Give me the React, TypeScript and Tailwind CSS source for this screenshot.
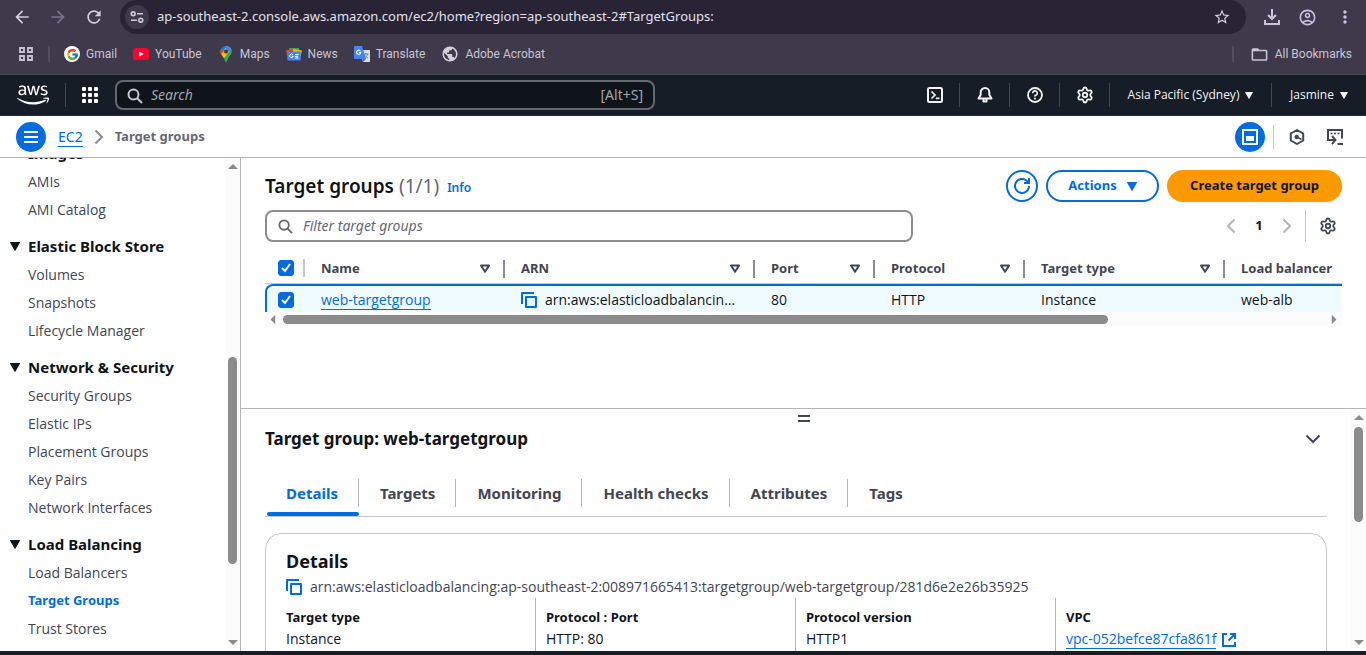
import React from "react";
import { Settings } from "lucide-react";
import { FaAws } from "react-icons/fa";
import { FcGoogle } from "react-icons/fc";
import {
  MdArrowBack,
  MdArrowForward,
  MdFolderOpen,
  MdMoreVert,
  MdOutlineAccountCircle,
  MdPublic,
  MdRefresh,
  MdStarBorder,
} from "react-icons/md";

type IconProps = { className?: string };

const SearchIcon = ({ className }: IconProps) => (
  <svg viewBox="0 0 16 16" className={className} fill="none" stroke="currentColor" strokeWidth="2">
    <circle cx="6.5" cy="6.5" r="5" />
    <path d="M10.2 10.2 15 15" />
  </svg>
);

const CaretDown = ({ className }: IconProps) => (
  <svg viewBox="0 0 10 9" className={className} fill="currentColor">
    <path d="M0.4 0h9.2c.4 0 .5.4.3.7L5.5 8.5c-.2.4-.8.4-1 0L.1.7C-.1.4 0 0 .4 0Z" />
  </svg>
);

const ScrollArrow = ({ className }: IconProps) => (
  <svg viewBox="0 0 10 5" className={className} fill="currentColor">
    <path d="M0 0h10L5 5Z" />
  </svg>
);

const SortIcon = ({ className }: IconProps) => (
  <svg viewBox="0 0 12 10" className={className} fill="none" stroke="currentColor" strokeWidth="2" strokeLinejoin="round">
    <path d="M2 1.5h8L6 7.8Z" />
  </svg>
);

const CopyIcon = ({ className }: IconProps) => (
  <svg viewBox="0 0 16 16" className={className} fill="none" stroke="currentColor" strokeWidth="2" strokeLinejoin="round">
    <path d="M1 12V1h12" />
    <path d="M5 5h10v10H5Z" />
  </svg>
);

const ExternalIcon = ({ className }: IconProps) => (
  <svg viewBox="0 0 14 14" className={className} fill="none" stroke="currentColor" strokeWidth="2">
    <path d="M5 1H1v12h12V9" />
    <path d="M8 1h5v5M13 1 6.5 7.5" />
  </svg>
);

const RefreshIcon = ({ className }: IconProps) => (
  <svg viewBox="0 0 16 16" className={className} fill="none" stroke="currentColor" strokeWidth="2">
    <path d="M15 8A7 7 0 1 1 12.6 2.7L14 4" />
    <path d="M15 0v5h-5" />
  </svg>
);

const Chevron = ({ className }: IconProps) => (
  <svg viewBox="0 0 10 16" className={className} fill="none" stroke="currentColor" strokeWidth="2">
    <path d="m1.5 1.5 6.5 6.5-6.5 6.5" />
  </svg>
);

const SiteInfoIcon = () => (
  <svg viewBox="0 0 14 12" className="h-3 w-[14px]" fill="none" stroke="#cfc9dc" strokeWidth="1.6">
    <circle cx="3.2" cy="2.8" r="1.9" />
    <path d="M7 2.8h6M1 9.2h6" />
    <circle cx="10.8" cy="9.2" r="1.9" />
  </svg>
);

const DownloadIcon = () => (
  <svg viewBox="0 0 16 16" className="size-4" fill="none" stroke="currentColor" strokeWidth="2">
    <path d="M8 0v9.500M4 6l4 4 4-4" />
    <path d="M1 11v4h14v-4" />
  </svg>
);

const AppsOutline = () => (
  <svg viewBox="0 0 14 14" className="size-[14px]" fill="none" stroke="#c9c4d4" strokeWidth="1.8">
    <path d="M1 1h4v4H1ZM9 1h4v4H9ZM1 9h4v4H1ZM9 9h4v4H9Z" />
  </svg>
);

const GridIcon = () => (
  <svg viewBox="0 0 16 16" className="size-4" fill="#ffffff">
    {[0, 6, 12].map((y) =>
      [0, 6, 12].map((x) => <rect key={`${x}-${y}`} x={x} y={y} width="4" height="4" rx="1" />),
    )}
  </svg>
);

const YouTubeMark = () => (
  <svg viewBox="0 0 16 12" className="h-3 w-4">
    <rect width="16" height="12" rx="2.6" fill="#ff0033" />
    <path d="M6 3.4v5.2L10.8 6Z" fill="#fff" />
  </svg>
);

const MapsMark = () => (
  <svg viewBox="-2 0 16 16" className="size-4">
    <defs>
      <clipPath id="pin">
        <path d="M6 0a5.600 5.600 0 0 1 5.600 5.600c0 3.600-3.600 4.800-4.600 9.200-.2 1.200-1.700 1.200-2 0C4 10.400.4 9.200.4 5.600A5.600 5.600 0 0 1 6 0Z" />
      </clipPath>
    </defs>
    <g clipPath="url(#pin)">
      <rect width="12" height="16" fill="#34a853" />
      <path d="M0 12V7l8-7h4v4L3 13Z" fill="#fbbc04" />
      <path d="M5 0h7v5L7 6Z" fill="#4285f4" />
      <path d="M0 0h5.500L4 5 1.500 3Z" fill="#1a73e8" />
      <path d="M0 2 4 5 0 9.500Z" fill="#ea4335" />
      <path d="m12 3-5 5-3 8h8Z" fill="#34a853" />
    </g>
    <circle cx="6" cy="5.500" r="2" fill="#3b3849" />
  </svg>
);

const NewsMark = () => (
  <svg viewBox="0 0 16 14" className="h-[14px] w-4">
    <path d="M3 1h10v6H3Z" fill="#34a853" />
    <path d="m0 3.500 8-2 1 6-8 1Z" fill="#ea4335" />
    <path d="m7 2 9 1.500-1.500 6H7Z" fill="#fbbc04" />
    <rect x="1.300" y="4.500" width="13.400" height="9" rx="1" fill="#4285f4" />
    <path d="M7 7.800a1.800 1.800 0 1 0 .3 1.500H5.600M9 7.500h3.600M9 9.300h3M9 11h3.600" fill="none" stroke="#fff" strokeWidth="1" />
  </svg>
);

const TranslateMark = () => (
  <svg viewBox="0 0 16 16" className="size-4">
    <path d="M6 4h9c.6 0 1 .4 1 1v10c0 .6-.4 1-1 1H9Z" fill="#dcdfe4" />
    <path d="M9.500 8h5M12 7v1M10.500 8c.4 2 2 3.500 3.500 4M13.600 8c-.5 2-1.800 3.500-3.400 4.300" fill="none" stroke="#6d7f8a" strokeWidth=".9" />
    <path d="M1 0h7l4 13H1c-.6 0-1-.4-1-1V1c0-.6.4-1 1-1Z" fill="#4285f4" />
    <path d="m9 13 3 0-3 3Z" fill="#3367d6" />
    <path d="M6.300 4.800A2.100 2.100 0 1 0 6.800 6.500H4.700" fill="none" stroke="#fff" strokeWidth="1.100" />
  </svg>
);

const TerminalIcon = () => (
  <svg viewBox="0 0 16 16" className="size-4" fill="none" stroke="#f2f3f5" strokeWidth="2">
    <rect x="1" y="1" width="14" height="14" rx="1.500" />
    <path d="m4.500 4.500 3.500 3.500-3.500 3.500" strokeWidth="1.700" />
    <path d="M8.800 11.300h3.700" strokeWidth="1.700" />
  </svg>
);

const BellIcon = () => (
  <svg viewBox="0 0 16 16" className="size-4" fill="none" stroke="#f2f3f5" strokeWidth="2" strokeLinejoin="round">
    <path d="M8 1a4.300 4.300 0 0 0-4.300 4.300v2.400L1.500 11.500h13l-2.200-3.800V5.300A4.300 4.300 0 0 0 8 1Z" />
    <path d="M6.500 12v2.500h3V12" />
  </svg>
);

const HelpIcon = () => (
  <svg viewBox="0 0 16 16" className="size-4" fill="none" stroke="#f2f3f5" strokeWidth="1.800">
    <circle cx="8" cy="8" r="7" />
    <path d="M5.700 6.300A2.300 2.300 0 1 1 8 8.500v1.200" strokeWidth="1.600" />
    <path d="M8 10.800v1.700" strokeWidth="1.800" />
  </svg>
);

const PanelIcon = () => (
  <svg viewBox="0 0 16 16" className="size-4" fill="none" stroke="#fff" strokeWidth="2">
    <path d="M1 1h14v14H1Z" />
    <path d="M5 8h6v3H5Z" fill="#fff" />
  </svg>
);

const HexIcon = () => (
  <svg viewBox="0 0 16 16" className="size-4" fill="none" stroke="#424650" strokeWidth="2" strokeLinejoin="round">
    <path d="M8 1 14.200 4.500v7L8 15l-6.200-3.500v-7Z" />
    <circle cx="7.700" cy="8" r="2.200" fill="#424650" stroke="none" />
    <path d="m8 8 4.500 2.500" strokeWidth="1.500" />
  </svg>
);

const ShellIcon = () => (
  <svg viewBox="0 0 16 16" className="size-4" fill="none" stroke="#424650" strokeWidth="2">
    <path d="M1 11V1h14v8.500" />
    <path d="M3.500 4.500h2M7 4.500h2M10.500 4.500h2" strokeWidth="1.500" />
    <path d="M0 11h8.500M5 7l3.500 4L5 15" strokeWidth="1.900" />
    <path d="M10.500 15H16" />
  </svg>
);

function CheckBox({ label }: { label: string }) {
  return (
    <label className="relative block size-4">
      <input
        type="checkbox"
        defaultChecked
        aria-label={label}
        className="peer block size-4 appearance-none rounded-[3px] border border-[#8c8c94] bg-white checked:border-[#006ce0] checked:bg-[#006ce0]"
      />
      <svg viewBox="0 0 16 16" className="pointer-events-none absolute inset-0 hidden size-4 peer-checked:block" fill="none" stroke="#fff" strokeWidth="2">
        <path d="m4 8 3 3 5-7" />
      </svg>
    </label>
  );
}

function VerticalScrollbar({ children }: { children: React.ReactNode }) {
  return (
    <div className="flex w-[15px] shrink-0 flex-col items-center bg-[#fcfcfc] py-1.5 text-[#8b8b8b]" aria-hidden="true">
      <ScrollArrow className="h-[5px] w-2.5 shrink-0 rotate-180" />
      <div className="flex w-full flex-1 flex-col items-center">{children}</div>
      <ScrollArrow className="h-[5px] w-2.5 shrink-0" />
    </div>
  );
}

const bookmarks = [
  { name: "Gmail", icon: <span className="grid size-4 place-items-center rounded-full bg-white"><FcGoogle className="size-[13px]" /></span> },
  { name: "YouTube", icon: <YouTubeMark /> },
  { name: "Maps", icon: <MapsMark /> },
  { name: "News", icon: <NewsMark /> },
  { name: "Translate", icon: <TranslateMark /> },
  { name: "Adobe Acrobat", icon: <MdPublic className="size-[18px] text-[#d3d0da]" /> },
];

function BrowserChrome() {
  return (
    <header className="shrink-0 border-b border-[#4a4850] bg-[#3e394b] text-[#c9c4d4]">
      <div className="flex h-[34px] items-center">
        <div className="flex w-[120px] items-center gap-4 pl-[12px]">
          <button aria-label="Back"><MdArrowBack className="size-5 text-[#d2cddc]" /></button>
          <button aria-label="Forward"><MdArrowForward className="size-5 text-[#79748a]" /></button>
          <button aria-label="Reload"><MdRefresh className="size-5 text-[#d2cddc]" /></button>
        </div>
        <div className="flex h-full flex-1 items-center rounded-full bg-[#282436] pr-[15px] pl-[5px]">
          <button aria-label="Site information" className="grid size-6 place-items-center rounded-full bg-[#3e394b]">
            <SiteInfoIcon />
          </button>
          <input
            aria-label="Address"
            defaultValue="ap-southeast-2.console.aws.amazon.com/ec2/home?region=ap-southeast-2#TargetGroups:"
            className="ml-2 flex-1 bg-transparent text-[13px] text-[#e3e0ea] outline-none"
          />
          <button aria-label="Bookmark"><MdStarBorder className="size-[18px] text-[#d2cddc]" /></button>
        </div>
        <div className="flex w-[120px] items-center gap-[18px] pl-[18px] text-[#c9c3dc]">
          <button aria-label="Downloads"><DownloadIcon /></button>
          <button aria-label="Profile"><MdOutlineAccountCircle className="size-[19px]" /></button>
          <button aria-label="Menu"><MdMoreVert className="size-5" /></button>
        </div>
      </div>
      <nav aria-label="Bookmarks" className="flex h-10 items-center pr-[14px] pl-[19px] font-[Roboto,'Noto_Sans',sans-serif] text-xs">
        <button aria-label="Apps"><AppsOutline /></button>
        <span className="mr-[14px] ml-[15px] h-4 w-0.5 bg-[#544f60]" />
        <div className="flex items-center gap-4">
          {bookmarks.map((b) => (
            <a key={b.name} href="#" className="flex items-center gap-1.5">
              {b.icon}
              {b.name}
            </a>
          ))}
        </div>
        <span className="mr-4 ml-auto h-4 w-0.5 bg-[#544f60]" />
        <a href="#" className="flex items-center gap-1.5">
          <MdFolderOpen className="size-[19px]" />
          All Bookmarks
        </a>
      </nav>
    </header>
  );
}

function Divider() {
  return <span className="h-6 w-px bg-[#424650]" />;
}

function AwsHeader() {
  return (
    <div className="flex h-[41px] shrink-0 items-center border-b border-[#232b37] bg-[#161d26] text-[#f2f3f5]">
      <a href="#" aria-label="AWS" className="pl-[17px]">
        <FaAws className="h-[26px] w-8 text-white" />
      </a>
      <span className="mr-4 ml-4 h-6 w-px bg-[#424650]" />
      <button aria-label="Services"><GridIcon /></button>
      <label className="ml-[17px] flex h-[30px] w-[540px] items-center rounded-lg border-2 border-[#656871] bg-[#0f141a] px-2.5">
        <SearchIcon className="mt-px size-4 text-[#c6c6cd]" />
        <input aria-label="Search" placeholder="Search" className="ml-2 flex-1 bg-transparent text-sm outline-none placeholder:text-[#a4a4ad] placeholder:italic" />
        <span className="text-sm text-[#a4a4ad]">[Alt+S]</span>
      </label>
      <div className="ml-auto flex items-center font-['Open_Sans','Noto_Sans',sans-serif]">
        {[
          { label: "CloudShell", icon: <TerminalIcon /> },
          { label: "Notifications", icon: <BellIcon /> },
          { label: "Help", icon: <HelpIcon /> },
          { label: "Settings", icon: <Settings className="size-[18px]" strokeWidth={2.4} /> },
        ].map((item) => (
          <React.Fragment key={item.label}>
            <button aria-label={item.label} className="grid w-[49px] place-items-center">{item.icon}</button>
            <Divider />
          </React.Fragment>
        ))}
        <button className="flex w-[161px] items-center justify-center gap-1.5 text-xs font-medium">
          Asia Pacific (Sydney)
          <CaretDown className="h-[7px] w-2" />
        </button>
        <Divider />
        <button className="flex w-[94px] items-center justify-center gap-1.5 text-xs font-medium">
          Jasmine
          <CaretDown className="h-[7px] w-2" />
        </button>
      </div>
    </div>
  );
}

function Breadcrumbs() {
  return (
    <div className="flex h-[42px] shrink-0 items-center border-b border-[#b4b4bb] bg-white px-4">
      <button aria-label="Open navigation" className="grid size-[30px] place-items-center rounded-full bg-[#006ce0]">
        <svg viewBox="0 0 14 12" className="h-3 w-[14px]" stroke="#fff" strokeWidth="2">
          <path d="M0 1h14M0 6h14M0 11h14" />
        </svg>
      </button>
      <nav aria-label="Breadcrumb" className="ml-3 flex items-center">
        <a href="#" className="border-b border-[#006ce0] pt-px text-sm leading-[18px] text-[#006ce0]">EC2</a>
        <Chevron className="mx-[11px] h-4 w-2.5 text-[#8c8c94]" />
        <span className="text-[13px] font-bold text-[#656871]">Target groups</span>
      </nav>
      <div className="ml-auto flex items-center">
        <button aria-label="Split panel" className="grid size-[30px] place-items-center rounded-full bg-[#006ce0]">
          <PanelIcon />
        </button>
        <span className="mr-[15px] ml-2 h-6 w-px bg-[#c6c6cd]" />
        <button aria-label="Amazon Q"><HexIcon /></button>
        <button aria-label="Console tools" className="mr-[7px] ml-[22px]"><ShellIcon /></button>
      </div>
    </div>
  );
}

const navigation = [
  { title: "Images", items: ["AMIs", "AMI Catalog"] },
  { title: "Elastic Block Store", items: ["Volumes", "Snapshots", "Lifecycle Manager"] },
  { title: "Network & Security", items: ["Security Groups", "Elastic IPs", "Placement Groups", "Key Pairs", "Network Interfaces"] },
  { title: "Load Balancing", items: ["Load Balancers", "Target Groups", "Trust Stores"] },
];

function Sidebar() {
  return (
    <aside className="flex w-[241px] shrink-0 border-r border-[#b4b4bb]">
      <nav aria-label="EC2" className="min-w-0 flex-1 overflow-hidden">
        <div className="-mt-[19px] flex flex-col gap-2">
          {navigation.map((group) => (
            <section key={group.title}>
              <button className="flex h-[29px] items-center gap-2 pl-2.5 text-[15px] font-bold text-[#0f141a]">
                <CaretDown className="h-[9px] w-2.5" />
                {group.title}
              </button>
              <ul>
                {group.items.map((item) => (
                  <li key={item} className="flex h-7 items-center pl-7">
                    <a
                      href="#"
                      className={
                        item === "Target Groups"
                          ? "text-[13px] font-bold text-[#006ce0]"
                          : "font-['Open_Sans','Noto_Sans',sans-serif] text-sm text-[#424650]"
                      }
                    >
                      {item}
                    </a>
                  </li>
                ))}
              </ul>
            </section>
          ))}
        </div>
      </nav>
      <VerticalScrollbar>
        <span className="flex-[188]" />
        <span className="w-[9px] flex-[207] rounded-full bg-[#8b8b8b]" />
        <span className="flex-[76]" />
      </VerticalScrollbar>
    </aside>
  );
}

const columns = [
  { name: "Name", width: "w-[200px]" },
  { name: "ARN", width: "w-[250px]" },
  { name: "Port", width: "w-[120px]" },
  { name: "Protocol", width: "w-[150px]" },
  { name: "Target type", width: "w-[200px]" },
  { name: "Load balancer", width: "w-[200px]" },
];

const cell = "border-t-2 border-[#006ce0] bg-[#f0fbff] py-0 pl-4";

function TargetTable() {
  return (
    <div className="overflow-hidden">
      <div className="h-[59px] overflow-hidden">
        <table className="w-[1160px] table-fixed border-separate border-spacing-0 text-left text-[#0f141a]">
          <thead className="text-[13px] text-[#424650]">
            <tr>
              <th className="h-[31px] w-10 border-b border-[#c6c6cd] p-0">
                <div className="flex items-center justify-between pl-[13px]">
                  <CheckBox label="Select all" />
                  <span className="h-[18px] w-0.5 bg-[#c6c6cd]" />
                </div>
              </th>
              {columns.map((c) => (
                <th key={c.name} className={`${c.width} h-[31px] border-b border-[#c6c6cd] p-0 font-bold`}>
                  <div className="flex items-center pt-0.5 pl-4">
                    <span className="flex-1">{c.name}</span>
                    <SortIcon className="mr-3 h-2.5 w-3" />
                    <span className="h-[18px] w-0.5 bg-[#8c8c94]" />
                  </div>
                </th>
              ))}
            </tr>
          </thead>
          <tbody className="font-['Open_Sans','Noto_Sans',sans-serif] text-sm">
            <tr className="h-[30px]">
              <td className="rounded-tl-lg border-t-2 border-l-2 border-[#006ce0] bg-[#f0fbff] py-0 pr-0 pl-[11px]">
                <CheckBox label="Select web-targetgroup" />
              </td>
              <td className={cell}>
                <a href="#" className="border-b border-[#006ce0] text-[#006ce0]">web-targetgroup</a>
              </td>
              <td className={cell}>
                <div className="flex items-center gap-2">
                  <button aria-label="Copy ARN" className="text-[#006ce0]"><CopyIcon className="size-4" /></button>
                  <span>arn:aws:elasticloadbalancin…</span>
                </div>
              </td>
              <td className={cell}>80</td>
              <td className={cell}>HTTP</td>
              <td className={cell}>Instance</td>
              <td className={cell}>web-alb</td>
            </tr>
          </tbody>
        </table>
      </div>
      <div className="flex h-[15px] items-center bg-[#fcfcfc] px-[3px] text-[#8b8b8b]" aria-hidden="true">
        <ScrollArrow className="h-[5px] w-2.5 rotate-90" />
        <span className="ml-[5px] h-[9px] w-[77%] rounded-full bg-[#8b8b8b]" />
        <ScrollArrow className="ml-auto h-[5px] w-2.5 -rotate-90" />
      </div>
    </div>
  );
}

function TargetGroups() {
  return (
    <section className="flex-1 px-6 pt-3">
      <div className="flex h-8 items-center gap-2">
        <h1 className="text-[19px] leading-[30px] font-semibold text-[#0f141a]">
          Target groups <span className="font-normal text-[#656871]">(1/1)</span>
        </h1>
        <a href="#" className="pt-1 text-xs font-semibold text-[#006ce0]">Info</a>
        <button aria-label="Refresh" className="ml-auto grid size-8 place-items-center rounded-full border-2 border-[#006ce0] text-[#006ce0]">
          <RefreshIcon className="size-4" />
        </button>
        <button className="flex h-8 w-[113px] items-center justify-center gap-2.5 rounded-full border-2 border-[#006ce0] text-[13px] font-bold text-[#006ce0]">
          Actions
          <CaretDown className="h-[9px] w-2.5" />
        </button>
        <button className="h-8 w-[175px] rounded-full bg-[#ff9900] text-[13px] font-bold text-[#0f141a]">Create target group</button>
      </div>
      <div className="mt-2 flex h-8 items-center">
        <label className="flex h-8 w-[648px] items-center rounded-lg border-2 border-[#8c8c94] px-[11px]">
          <SearchIcon className="size-[15px] text-[#656871]" />
          <input aria-label="Filter target groups" placeholder="Filter target groups" className="ml-2.5 flex-1 bg-transparent text-sm outline-none placeholder:text-[#656871] placeholder:italic" />
        </label>
        <div className="ml-auto flex items-center text-[13px] font-bold text-[#0f141a]">
          <button aria-label="Previous page" className="text-[#b4b4bb]"><Chevron className="h-4 w-2.5 rotate-180" /></button>
          <button className="mx-[19px] w-2">1</button>
          <button aria-label="Next page" className="text-[#b4b4bb]"><Chevron className="h-4 w-2.5" /></button>
          <span className="mr-[13px] ml-[13px] h-8 w-px bg-[#c6c6cd]" />
          <button aria-label="Preferences" className="mr-[5px] text-[#424650]"><Settings className="size-[18px]" strokeWidth={2.4} /></button>
        </div>
      </div>
      <div className="mt-[11px]">
        <TargetTable />
      </div>
    </section>
  );
}

const tabs = ["Details", "Targets", "Monitoring", "Health checks", "Attributes", "Tags"];

const details = [
  { k: "Target type", v: "Instance" },
  { k: "Protocol : Port", v: "HTTP: 80" },
  { k: "Protocol version", v: "HTTP1" },
];

function SplitPanel() {
  return (
    <section className="flex h-[243px] shrink-0 border-t border-[#b4b4bb]">
      <div className="min-w-0 flex-1 overflow-hidden pr-6 pl-6">
        <div className="flex h-[18px] items-center justify-center pl-4">
          <button aria-label="Resize panel">
            <svg viewBox="0 0 12 7" className="h-[7px] w-3" stroke="#424650" strokeWidth="2">
              <path d="M0 1h12M0 6h12" />
            </svg>
          </button>
        </div>
        <div className="flex h-6 items-center justify-between pr-1.5">
          <h2 className="text-[17px] leading-6 font-bold text-[#0f141a]">Target group: web-targetgroup</h2>
          <button aria-label="Collapse panel" className="grid size-4 place-items-center text-[#424650]"><Chevron className="h-4 w-2.5 rotate-90" /></button>
        </div>
        <div role="tablist" className="mt-6 flex h-[42px] border-b border-[#c6c6cd] text-[15px] font-bold text-[#424650]">
          {tabs.map((t, i) => (
            <div key={t} className="relative flex h-full pt-1">
              <button role="tab" aria-selected={i === 0} className={i === 0 ? "h-7 pr-5 pl-[21px] text-[#006ce0]" : "h-7 pr-5 pl-[21px]"}>
                {t}
              </button>
              {i < tabs.length - 1 && <span className="h-7 w-px bg-[#b4b4bb]" />}
              {i === 0 && <span className="absolute right-0 bottom-0 left-0.5 h-1 rounded-full bg-[#006ce0]" />}
            </div>
          ))}
        </div>
        <div className="mt-4 h-[200px] rounded-2xl border border-[#c6c6cd] px-5 pt-[15px]">
          <h3 className="text-lg leading-6 font-bold text-[#0f141a]">Details</h3>
          <div className="mt-1 flex h-5 items-center gap-2 font-['Open_Sans','Noto_Sans',sans-serif] text-sm text-[#424650]">
            <button aria-label="Copy ARN" className="text-[#006ce0]"><CopyIcon className="size-4" /></button>
            arn:aws:elasticloadbalancing:ap-southeast-2:008971665413:targetgroup/web-targetgroup/281d6e2e26b35925
          </div>
          <dl className="mt-px grid grid-cols-4 gap-x-5 text-[#0f141a]">
            {details.map((d, i) => (
              <div key={d.k} className={i === 0 ? "h-24 pt-2" : "-ml-[11px] h-24 border-l border-[#b4b4bb] pt-2 pl-2.5"}>
                <dt className="text-[13px] leading-[22px] font-bold">{d.k}</dt>
                <dd className="font-['Open_Sans','Noto_Sans',sans-serif] text-sm leading-[22px]">{d.v}</dd>
              </div>
            ))}
            <div className="-ml-[11px] h-24 border-l border-[#b4b4bb] pt-2 pl-2.5">
              <dt className="text-[13px] leading-[22px] font-bold">VPC</dt>
              <dd className="font-['Open_Sans','Noto_Sans',sans-serif] text-sm leading-[22px]">
                <a href="#" className="inline-flex items-center gap-1.5 text-[#006ce0]">
                  <span className="border-b border-[#006ce0] leading-[18px]">vpc-052befce87cfa861f</span>
                  <ExternalIcon className="size-[14px]" />
                </a>
              </dd>
            </div>
          </dl>
        </div>
      </div>
      <VerticalScrollbar>
        <span className="flex-[7]" />
        <span className="w-[9px] flex-[94] rounded-full bg-[#8b8b8b]" />
        <span className="flex-[116]" />
      </VerticalScrollbar>
    </section>
  );
}

export default function App() {
  return (
    <div className="flex h-screen flex-col overflow-hidden bg-white font-['Noto_Sans','Open_Sans',sans-serif]">
      <BrowserChrome />
      <AwsHeader />
      <Breadcrumbs />
      <div className="flex min-h-0 flex-1">
        <Sidebar />
        <main className="flex min-w-0 flex-1 flex-col">
          <TargetGroups />
          <SplitPanel />
        </main>
      </div>
      <footer className="h-1 shrink-0 bg-[#161d26]" />
    </div>
  );
}
